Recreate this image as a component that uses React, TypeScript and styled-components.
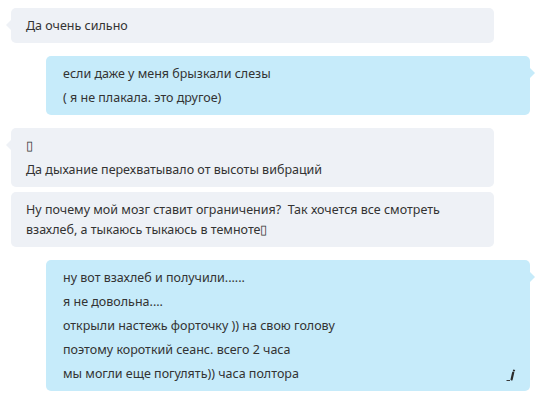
import React from 'react';
import styled, { createGlobalStyle, css } from 'styled-components';

const GlobalStyle = createGlobalStyle`
  html, body {
    margin: 0;
    padding: 0;
    background: #ffffff;
  }
  body {
    font-family: 'Noto Sans', 'Open Sans', sans-serif;
  }
`;

type Side = 'in' | 'out';

interface IMessage {
  side: Side;
  lines: string[];
  first: boolean;
  edited?: boolean;
}

const messages: IMessage[] = [
  { side: 'in', first: true, lines: ['Да очень сильно'] },
  {
    side: 'out',
    first: true,
    lines: ['если даже у меня брызкали слезы', '( я не плакала. это другое)'],
  },
  {
    side: 'in',
    first: true,
    lines: ['\u25AF', 'Да дыхание перехватывало от высоты вибраций'],
  },
  {
    side: 'in',
    first: false,
    lines: [
      'Ну почему мой мозг ставит ограничения?  Так хочется все смотреть взахлеб, а тыкаюсь тыкаюсь в темноте\u25AF',
    ],
  },
  {
    side: 'out',
    first: true,
    edited: true,
    lines: [
      'ну вот взахлеб и получили......',
      'я не довольна....',
      'открыли настежь форточку )) на свою голову',
      'поэтому короткий сеанс. всего 2 часа',
      'мы могли еще погулять)) часа полтора',
    ],
  },
];

const EditedIcon = (): JSX.Element => (
  <EditedMark width='11' height='12' viewBox='0 0 11 12'>
    <path d='M0.5 11.5 H4' stroke='#3a3a3a' strokeWidth='1' />
    <path d='M7.2 3.5 L5.6 10.5' stroke='#2b2b2b' strokeWidth='2.2' strokeLinecap='round' />
    <path d='M8.2 0.8 L7.8 2.2' stroke='#2b2b2b' strokeWidth='2' />
  </EditedMark>
);

const App = (): JSX.Element => {
  return (
    <>
      <GlobalStyle />
      <Conversation>
        {messages.map((message, index) => {
          const prev = messages[index - 1];
          const sameSender = prev && prev.side === message.side;
          return (
            <Bubble
              key={index}
              $side={message.side}
              $first={message.first}
              $tight={Boolean(sameSender)}
            >
              {message.lines.map((line, i) => (
                <Line key={i}>
                  <span>{line}</span>
                  {message.edited && i === message.lines.length - 1 && <EditedIcon />}
                </Line>
              ))}
            </Bubble>
          );
        })}
      </Conversation>
    </>
  );
};

const Conversation = styled.div`
  display: flex;
  flex-direction: column;
  padding: 8px 13px 8px 11px;
`;

const tailIn = css`
  &::before {
    content: '';
    position: absolute;
    left: -5px;
    top: 12px;
    border-style: solid;
    border-width: 5px 5px 5px 0;
    border-color: transparent #eef1f6 transparent transparent;
  }
`;

const tailOut = css`
  &::before {
    content: '';
    position: absolute;
    right: -5px;
    top: 12px;
    border-style: solid;
    border-width: 5px 0 5px 5px;
    border-color: transparent transparent transparent #c6ebfa;
  }
`;

const Bubble = styled.div<{ $side: Side; $first: boolean; $tight: boolean }>`
  position: relative;
  box-sizing: border-box;
  padding: 8px 13px 7px 15px;
  border-radius: 5px;
  margin-top: ${({ $tight }) => ($tight ? '5px' : '13px')};
  display: flex;
  flex-direction: column;
  gap: 4px;
  color: #333333;
  font-size: 12.5px;
  line-height: 20px;
  white-space: pre-wrap;

  &:first-child {
    margin-top: 0;
  }

  ${({ $side }) =>
    $side === 'in'
      ? css`
          background: #eef1f6;
          margin-right: 36px;
        `
      : css`
          background: #c6ebfa;
          margin-left: 35px;
          padding-left: 17px;
        `}

  ${({ $first, $side }) => $first && ($side === 'in' ? tailIn : tailOut)}
`;

const Line = styled.div`
  display: flex;
  justify-content: space-between;
  align-items: flex-end;
`;

const EditedMark = styled.svg`
  flex: none;
  margin-bottom: 3px;
`;

export default App;
